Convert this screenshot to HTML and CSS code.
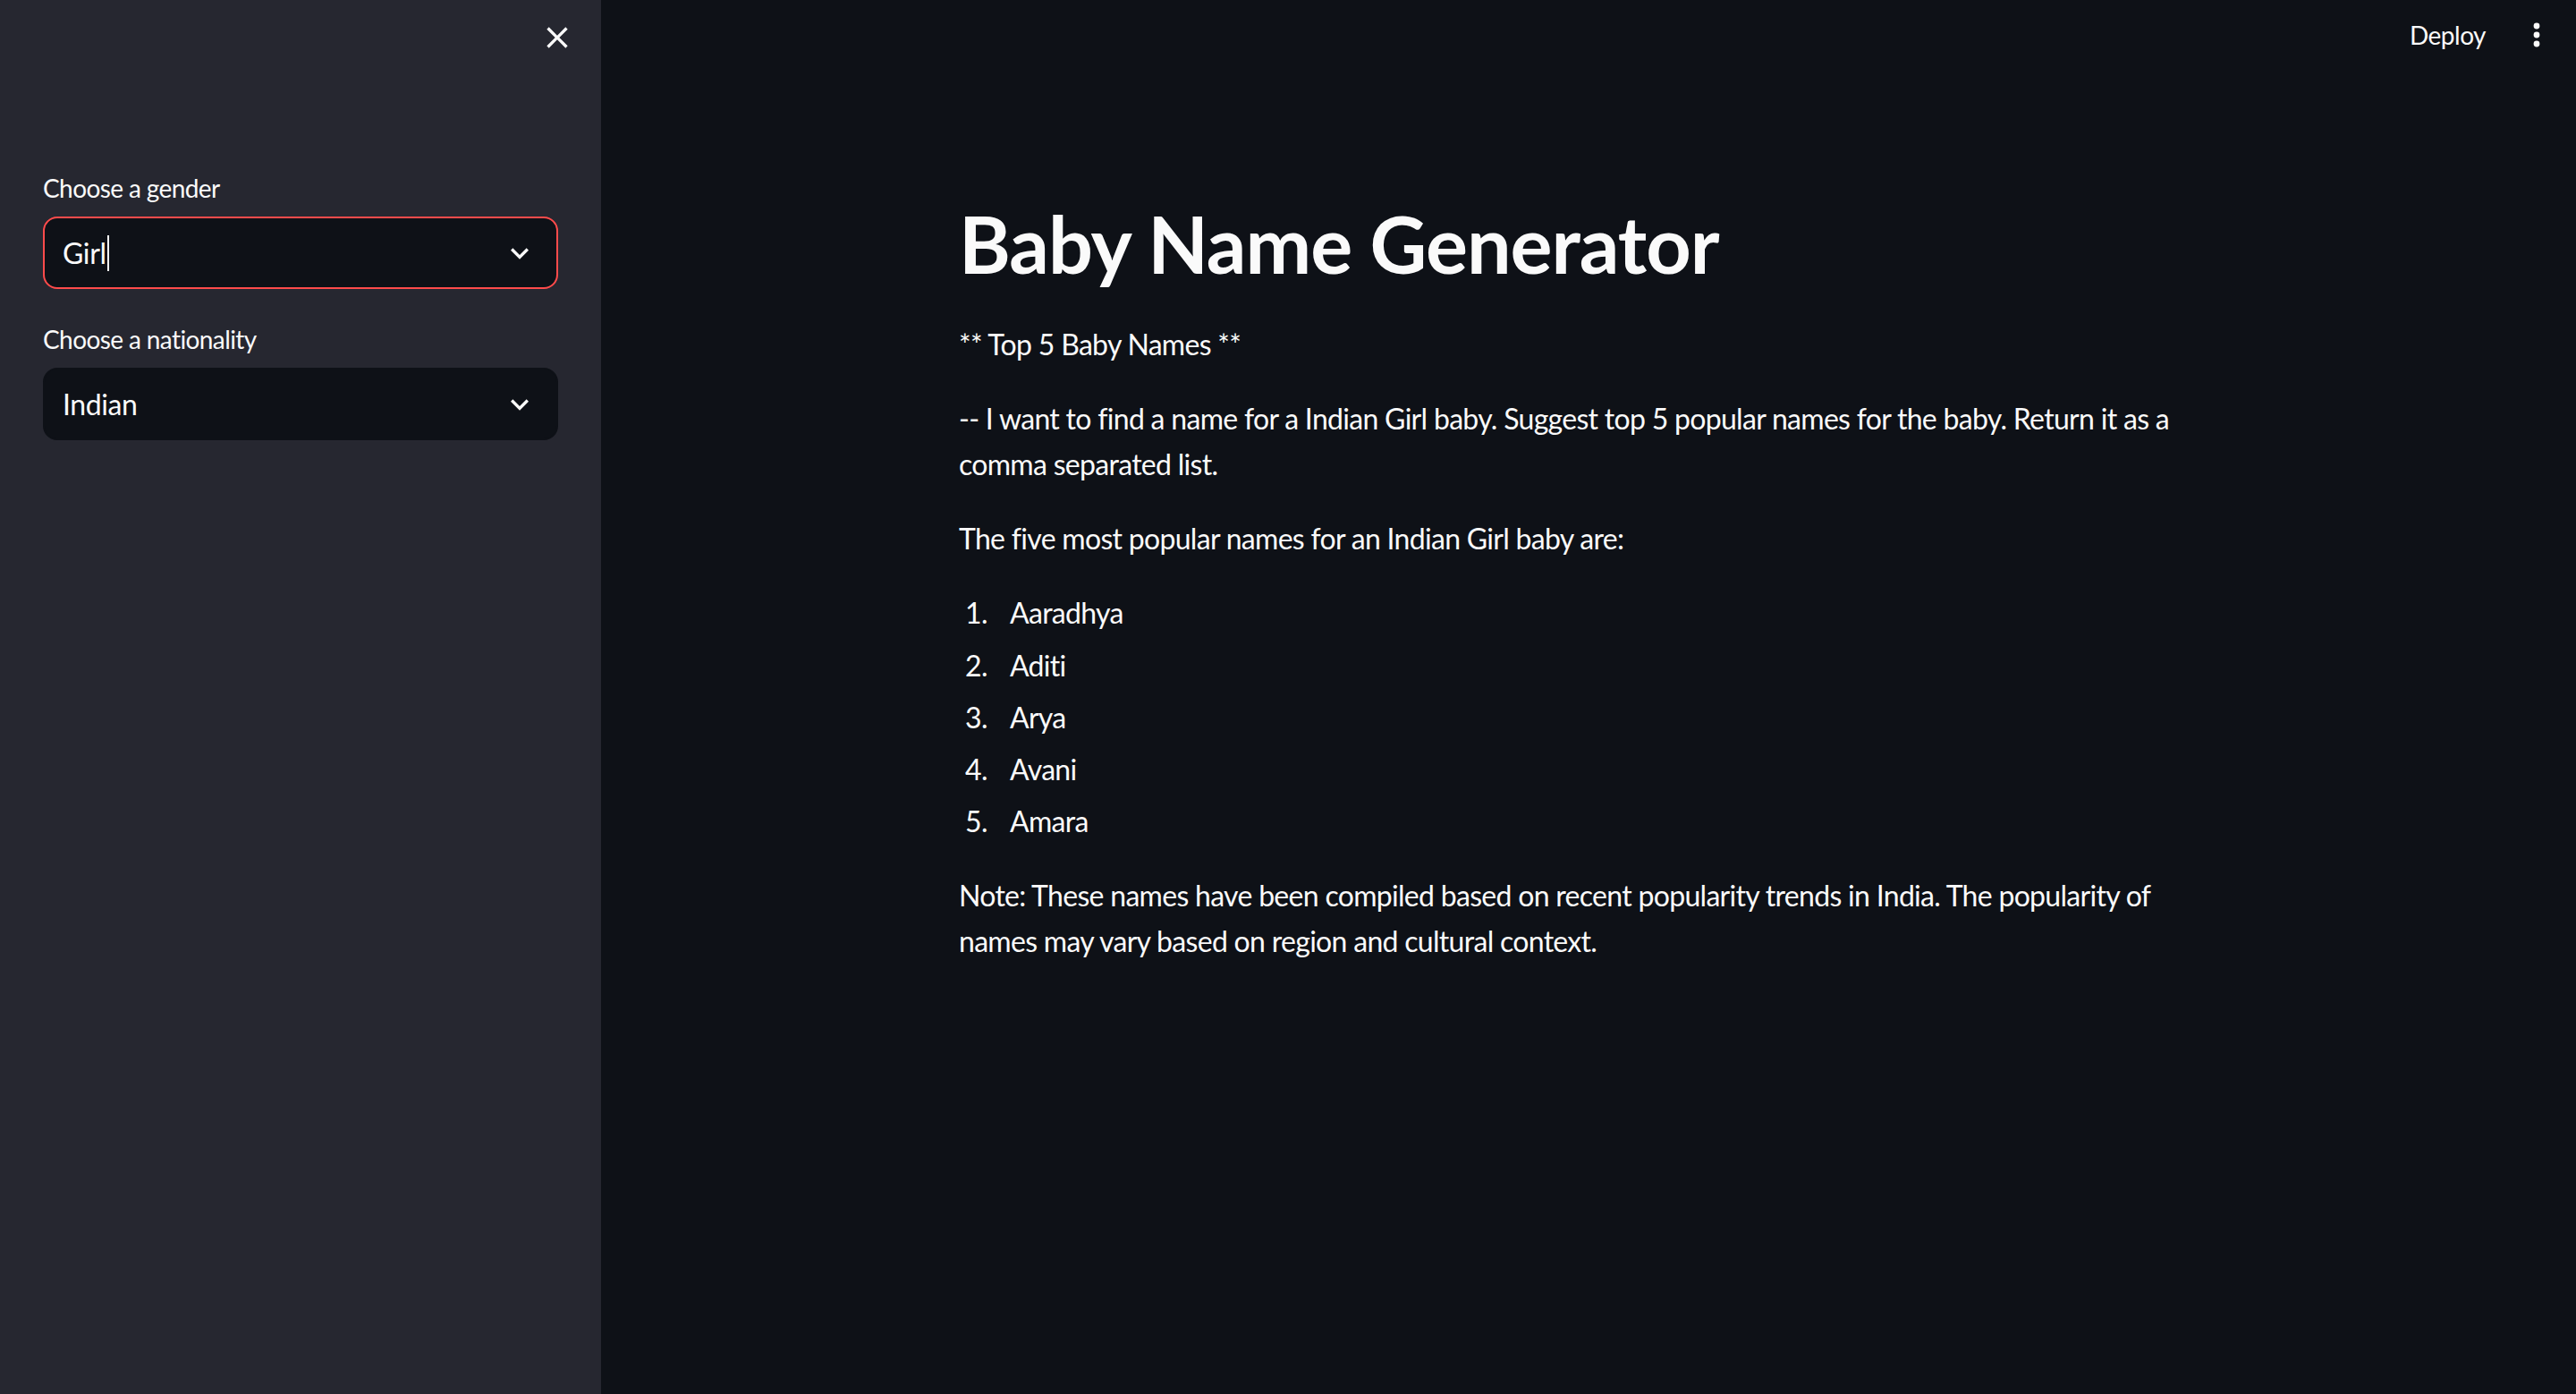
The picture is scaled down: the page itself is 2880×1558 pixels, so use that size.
FILE: index.html
```html
<!DOCTYPE html>
<html lang="en">
<head>
<meta charset="utf-8">
<title>Baby Name Generator</title>
<link rel="stylesheet" href="styles.css">
</head>
<body>
<aside class="sidebar">
  <div class="sidebar-top">
    <button class="icon-btn" aria-label="Close sidebar">
      <svg viewBox="0 0 24 24" width="40" height="40"><path fill="#fafafa" d="M19 6.41L17.59 5 12 10.59 6.41 5 5 6.41 10.59 12 5 17.59 6.41 19 12 13.41 17.59 19 19 17.59 13.41 12z"/></svg>
    </button>
  </div>
  <div class="sidebar-body">
    <div class="field">
      <label class="field-label">Choose a gender</label>
      <div class="select focused">
        <span class="select-value">Girl<span class="caret"></span></span>
        <svg class="chev" viewBox="0 0 24 24" width="40" height="40"><path fill="#fafafa" d="M16.59 8.59L12 13.17 7.41 8.59 6 10l6 6 6-6z"/></svg>
      </div>
    </div>
    <div class="field">
      <label class="field-label">Choose a nationality</label>
      <div class="select">
        <span class="select-value">Indian</span>
        <svg class="chev" viewBox="0 0 24 24" width="40" height="40"><path fill="#fafafa" d="M16.59 8.59L12 13.17 7.41 8.59 6 10l6 6 6-6z"/></svg>
      </div>
    </div>
  </div>
</aside>
<main class="main">
  <header class="topbar">
    <span class="deploy">Deploy</span>
    <svg class="dots" viewBox="0 0 8 28" width="8" height="28"><circle cx="4" cy="4" r="3.4" fill="#fafafa"/><circle cx="4" cy="14" r="3.4" fill="#fafafa"/><circle cx="4" cy="24" r="3.4" fill="#fafafa"/></svg>
  </header>
  <div class="content">
    <h1 class="title">Baby Name Generator</h1>
    <div class="markdown">
      <p>** Top 5 Baby Names **</p>
      <p>-- I want to find a name for a Indian Girl baby. Suggest top 5 popular names for the baby. Return it as a comma separated list.</p>
      <p>The five most popular names for an Indian Girl baby are:</p>
      <ol class="names">
        <li>Aaradhya</li>
        <li>Aditi</li>
        <li>Arya</li>
        <li>Avani</li>
        <li>Amara</li>
      </ol>
      <p>Note: These names have been compiled based on recent popularity trends in India. The popularity of names may vary based on region and cultural context.</p>
    </div>
  </div>
</main>
</body>
</html>
```

FILE: styles.css
```css
html, body {
  margin: 0;
  padding: 0;
  height: 100%;
}
body {
  display: flex;
  background: #0e1117;
  color: #fafafa;
  font-family: "Source Sans Pro", "Lato", "Liberation Sans", sans-serif;
  overflow: hidden;
}
.sidebar {
  width: 672px;
  flex: 0 0 672px;
  background: #262730;
  display: flex;
  flex-direction: column;
}
.sidebar-top {
  height: 84px;
  display: flex;
  align-items: center;
  justify-content: flex-end;
  padding-right: 29px;
}
.icon-btn {
  background: none;
  border: 0;
  padding: 0;
  width: 40px;
  height: 40px;
  display: flex;
}
.sidebar-body {
  padding: 105px 48px 0;
  display: flex;
  flex-direction: column;
  gap: 35px;
}
.field {
  display: flex;
  flex-direction: column;
}
.field-label {
  font-size: 28px;
  line-height: 42px;
  margin-bottom: 11px;
  letter-spacing: -0.6px;
}
.select {
  box-sizing: border-box;
  height: 81px;
  border: 2px solid #0e1117;
  border-radius: 16px;
  background: #0e1117;
  display: flex;
  align-items: center;
  justify-content: space-between;
  padding: 0 21px 0 20px;
}
.select.focused {
  border-color: #ff4b4b;
}
.select-value {
  font-size: 32px;
  display: flex;
  align-items: center;
  letter-spacing: -0.4px;
}
.caret {
  display: inline-block;
  width: 2px;
  height: 40px;
  background: #fafafa;
  margin-left: 1px;
}
.main {
  flex: 1;
  display: flex;
  flex-direction: column;
}
.topbar {
  height: 78px;
  display: flex;
  align-items: center;
  justify-content: flex-end;
  gap: 53px;
  padding-right: 40px;
}
.deploy {
  font-size: 28px;
  letter-spacing: -0.5px;
}
.content {
  width: 1408px;
  margin: 0 auto;
  padding-top: 142px;
}
.title {
  margin: 0 0 33px;
  font-size: 88px;
  line-height: 1.2;
  font-weight: 700;
  letter-spacing: -1px;
}
.markdown {
  font-size: 32px;
  line-height: 1.6;
  letter-spacing: -0.7px;
}
.markdown p {
  margin: 0 0 32px;
}
.names {
  list-style: none;
  margin: 0 0 32px;
  padding: 0;
  counter-reset: item;
}
.names li {
  counter-increment: item;
  padding-left: 57px;
  margin-bottom: 7px;
}
.names li:last-child {
  margin-bottom: 0;
}
.names li::before {
  content: counter(item) ".";
  display: inline-block;
  width: 50px;
  margin-left: -50px;
}
```
